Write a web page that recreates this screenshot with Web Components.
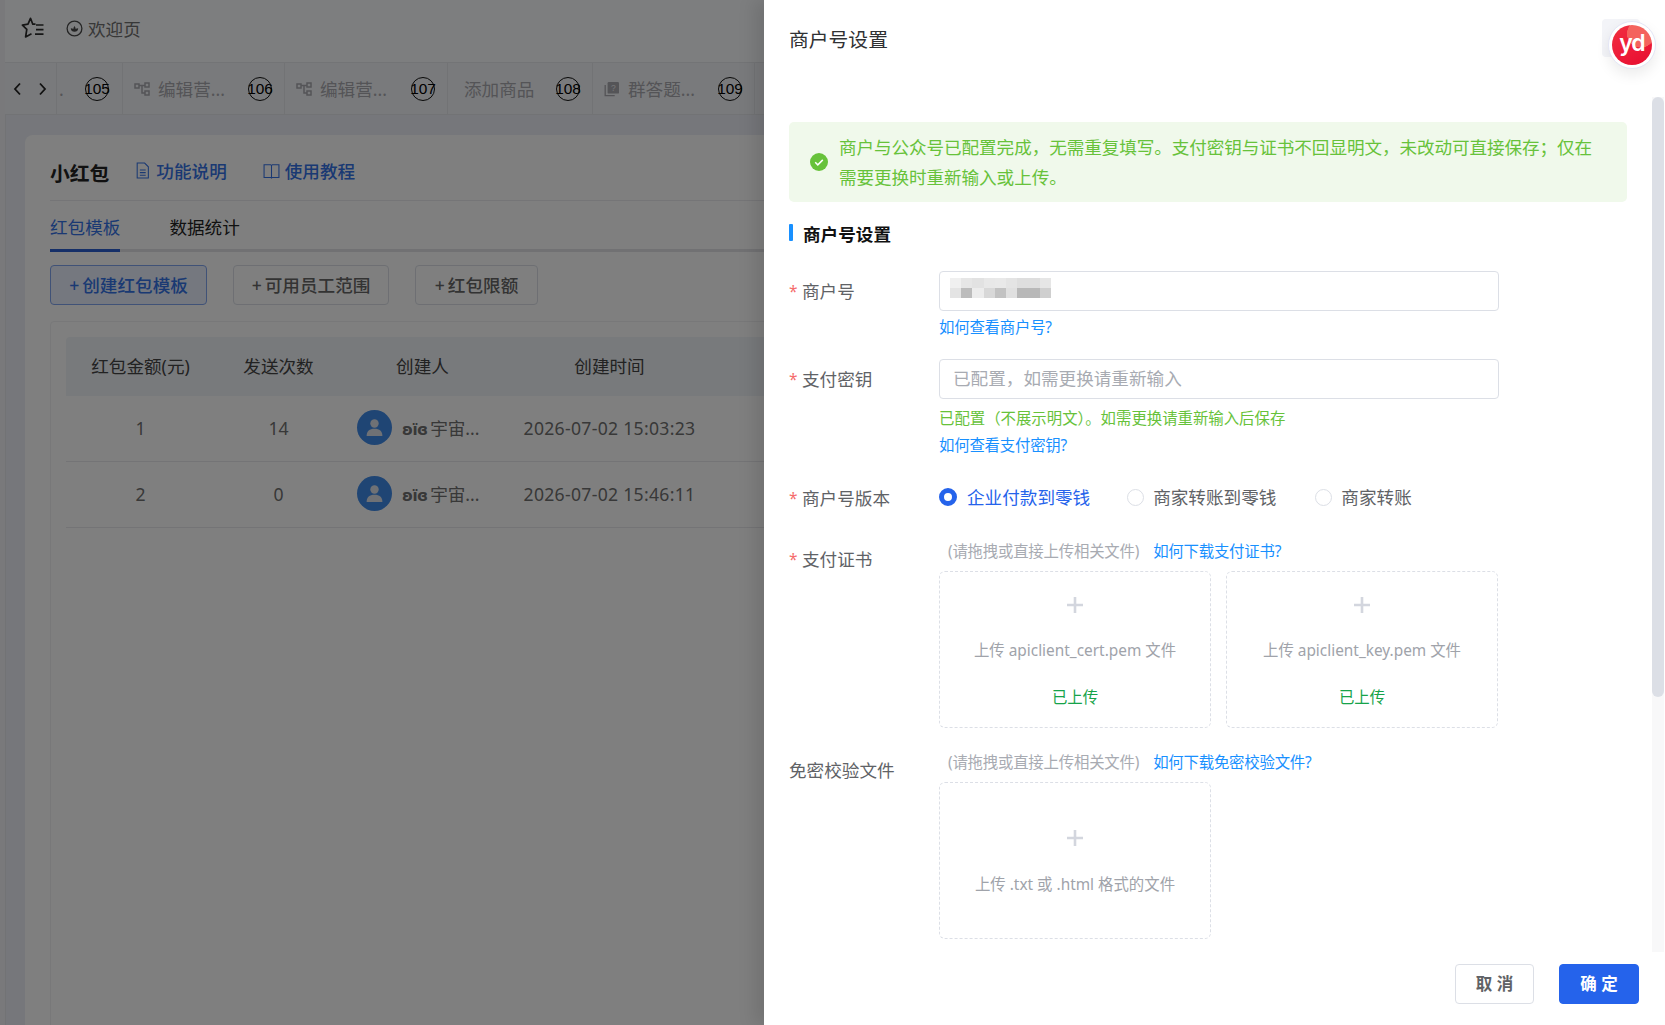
<!DOCTYPE html>
<html lang="zh-CN">
<head>
<meta charset="utf-8">
<title>商户号设置</title>
<style>
    html, body { margin: 0; height: 100%; overflow: hidden; }
    body { font-family: "Noto Sans", "Noto Sans CJK SC", sans-serif; font-size: 17.6px; }
</style>
</head>
<body>
<template id="icons">
    <svg id="node" viewBox="0 0 16 16" fill="none" stroke="currentColor" stroke-width="1.5"><rect x="1" y="3" width="4" height="4"/><rect x="11" y="2" width="4" height="4"/><rect x="11" y="10" width="4" height="4"/><path d="M5 4.5h6M8 4.5V12h3"/></svg>
    <svg id="quiz" viewBox="0 0 16 16"><path d="M1.2 4v10.6h9.5" fill="none" stroke="currentColor" stroke-width="1.3"/><rect x="3.6" y="1" width="11.4" height="11.6" rx="1.2" fill="currentColor"/><text x="9.3" y="10" font-size="8.5" font-family="Liberation Sans" text-anchor="middle" fill="#eee">?</text></svg>
</template>

<app-shell>
    <top-bar></top-bar>
    <tab-strip>
        <tab-item num="105" width="66" label="." cut></tab-item>
        <tab-item num="106" width="162" label="编辑营..." icon="node"></tab-item>
        <tab-item num="107" width="163" label="编辑营..." icon="node"></tab-item>
        <tab-item num="108" width="145" label="添加商品"></tab-item>
        <tab-item num="109" width="163" label="群答题..." icon="quiz"></tab-item>
    </tab-strip>
    <hongbao-page></hongbao-page>
</app-shell>
<drawer-mask></drawer-mask>
<merchant-drawer></merchant-drawer>

<script>
const ICONS = {};
document.getElementById("icons").content.querySelectorAll("svg").forEach(s => ICONS[s.id] = s.outerHTML);

class AppShell extends HTMLElement {
    constructor() {
        super();
        this.attachShadow({ mode: "open" });
    }
    connectedCallback() {
        this.shadowRoot.innerHTML = `
            <style>
                :host { display: block; height: 1025px; background: #eceff6; border-left: 5px solid #f2f3f6; box-shadow: inset 1px 0 0 #e4e6ea; box-sizing: border-box; overflow: hidden; color: #555; }
            </style>
            <slot></slot>
        `;
    }
}

class TopBar extends HTMLElement {
    constructor() {
        super();
        this.attachShadow({ mode: "open" });
    }
    connectedCallback() {
        this.shadowRoot.innerHTML = `
            <style>
                :host { display: flex; align-items: center; height: 63px; box-sizing: border-box; background: #fbfdff; border-bottom: 1px solid #e6e8ec; padding: 0 0 6px 16px; }
                .star { width: 24px; height: 22px; color: #2c2c2c; }
                .home { display: flex; align-items: center; margin-left: 21px; gap: 5px; color: #707070; }
                .home svg { width: 17px; height: 17px; color: #4a4a4a; }
            </style>
            <svg class="star" viewBox="0 0 24 22" fill="none" stroke="currentColor" stroke-width="1.7" stroke-linejoin="round"><path d="M14.5 7.2h-2.7L9.5 1.3 7 7.2l-5.6.9 4.4 4.3-1.2 7.6 5.9-3.2"/><path d="M15 8h7.5M15 12.6h7.5M14 17.2h8.5"/></svg>
            <div class="home">
                <svg viewBox="0 0 17 17" fill="none" stroke="currentColor" stroke-width="1.3"><circle cx="8.5" cy="8.5" r="7.4"/><path d="M4.8 8.2c0 2.4 1.6 3.6 3.7 3.6s3.7-1.2 3.7-3.6c-1.2 0-2 .3-2.5.9-.2-1.2-.6-2.2-1.2-3-.6.8-1 1.8-1.2 3-.5-.6-1.3-.9-2.5-.9z" fill="currentColor" stroke="none"/></svg>
                <span>欢迎页</span>
            </div>
        `;
    }
}

class TabStrip extends HTMLElement {
    constructor() {
        super();
        this.attachShadow({ mode: "open" });
    }
    connectedCallback() {
        this.shadowRoot.innerHTML = `
            <style>
                :host { display: flex; height: 52px; box-sizing: border-box; background: #f3f5f8; border-bottom: 1px solid #e4e6ea; }
                .arrows { display: flex; align-items: center; justify-content: space-between; width: 51px; box-sizing: border-box; padding: 0 9px 0 8px; color: #222; }
                .arrows svg { width: 9px; height: 14px; }
            </style>
            <div class="arrows">
                <svg viewBox="0 0 9 14" fill="none" stroke="currentColor" stroke-width="1.8"><path d="M7 1.5L2 7l5 5.5"/></svg>
                <svg viewBox="0 0 9 14" fill="none" stroke="currentColor" stroke-width="1.8"><path d="M2 1.5L7 7l-5 5.5"/></svg>
            </div>
            <slot></slot>
        `;
    }
}

class TabItem extends HTMLElement {
    constructor() {
        super();
        this.attachShadow({ mode: "open" });
    }
    connectedCallback() {
        const icon = this.getAttribute("icon");
        const cut = this.hasAttribute("cut");
        this.shadowRoot.innerHTML = `
            <style>
                :host { display: flex; align-items: center; box-sizing: border-box; width: ${this.getAttribute("width")}px; padding: 0 ${cut ? 13 : 12}px 0 ${cut ? 2 : 11}px; border-left: 1px solid #e4e6ea; color: #a8a8ae; gap: 8px; }
                :host(:last-child) { border-right: 1px solid #e4e6ea; }
                svg { width: 16px; height: 16px; flex: none; }
                .label { flex: 1; white-space: nowrap; }
                .label.plain { padding-left: ${cut ? 0 : 5}px; }
                .num { width: 22px; height: 22px; flex: none; border: 1px solid #111; border-radius: 50%; display: flex; justify-content: center; align-items: center; color: #000; font-size: 15.4px; font-family: "Liberation Sans", sans-serif; }
            </style>
            ${icon ? ICONS[icon] : ""}
            <span class="label ${icon ? "" : "plain"}">${this.getAttribute("label")}</span>
            <span class="num">${this.getAttribute("num")}</span>
        `;
    }
}

class HongbaoPage extends HTMLElement {
    constructor() {
        super();
        this.attachShadow({ mode: "open" });
    }
    style() {
        return `
            :host { display: block; margin: 20px 0 0 20px; background: #fff; border-radius: 8px 8px 0 0; padding: 0 25px; height: 960px; }
            .head { display: flex; align-items: center; height: 66px; box-sizing: border-box; padding-top: 6px; border-bottom: 1px solid #eaebee; }
            .head b { font-size: 19.8px; color: #222; margin-right: 25px; position: relative; top: 2px; }
            .doc-link { display: flex; align-items: center; gap: 5px; margin: 0 36px 0 0; color: #3573e6; font-weight: 500; }
            .doc-link svg { width: 17px; height: 17px; }
            .tabs { display: flex; height: 48px; gap: 49px; border-bottom: 3px solid #e2e3e6; }
            .tabs span { line-height: 53px; height: 48px; color: #222; }
            .tabs .on { color: #3573e6; border-bottom: 3px solid #2a5fd0; }
            .btns { display: flex; gap: 26px; margin-top: 13px; }
            .btn { display: flex; justify-content: center; align-items: center; height: 40px; box-sizing: border-box; padding-bottom: 1px; border: 1px solid #dcdfe6; border-radius: 4px; font-weight: 500; color: #666; background: #fff; }
            .btn.main { color: #3573e6; border-color: #80a4ee; background: #eaf1ff; }
            .btn i { font-style: normal; margin-right: 3px; }
            .wrap { margin-top: 16px; border: 1px solid #f0f1f3; border-radius: 4px; padding: 15px; height: 700px; }
            .row { display: grid; grid-template-columns: 149px 127px 161px 213px 1fr; align-items: center; height: 66px; box-sizing: border-box; padding-bottom: 2px; border-bottom: 1px solid #e8e9ec; text-align: center; color: #707070; }
            .row.th { height: 59px; background: #f1f4f8; border: 0; color: #444; border-radius: 4px 4px 0 0; }
            .who { display: flex; align-items: center; justify-content: flex-start; padding-left: 15px; gap: 10px; white-space: nowrap; }
            .ava { width: 35px; height: 35px; border-radius: 50%; background: #3f8ae8; display: flex; justify-content: center; align-items: center; }
            .ava svg { width: 21px; height: 21px; }
            .time { letter-spacing: .3px; white-space: nowrap; }
            .nick { font-family: "DejaVu Sans", sans-serif; font-weight: 700; font-size: 15px; letter-spacing: -.5px; margin-right: -2px; }
        `;
    }
    rowHtml(amount, count, time) {
        return `
            <div class="row">
                <span>${amount}</span><span>${count}</span>
                <div class="who">
                    <span class="ava"><svg viewBox="0 0 20 20" fill="#dfe3ea"><circle cx="10" cy="6.2" r="4"/><path d="M2.5 18c0-4.6 2.8-6.8 7.5-6.8s7.5 2.2 7.5 6.8z"/></svg></span>
                    <span><span class="nick">ʚïɞ</span> 宇宙...</span>
                </div>
                <span class="time">${time}</span><span></span>
            </div>
        `;
    }
    connectedCallback() {
        this.shadowRoot.innerHTML = `
            <style>${this.style()}</style>
            <div class="head">
                <b>小红包</b>
                <span class="doc-link"><svg viewBox="0 0 16 16" fill="none" stroke="currentColor" stroke-width="1"><path d="M3 1h7l3.5 3.5V15H3zM5.5 7.5h5.5M5.5 10h5.5M5.5 12.5h5.500"/></svg>功能说明</span>
                <span class="doc-link"><svg viewBox="0 0 16 16" fill="none" stroke="currentColor" stroke-width="1"><path d="M1 2.500h6.200l.8.800.8-.8H15v12H8.800l-.8.600-.8-.6H1zM8 3.300v11.500"/></svg>使用教程</span>
            </div>
            <div class="tabs"><span class="on">红包模板</span><span>数据统计</span></div>
            <div class="btns">
                <div class="btn main" style="width:157px"><i>+</i>创建红包模板</div>
                <div class="btn" style="width:156px"><i>+</i>可用员工范围</div>
                <div class="btn" style="width:123px"><i>+</i>红包限额</div>
            </div>
            <div class="wrap">
                <div class="row th"><span>红包金额(元)</span><span>发送次数</span><span>创建人</span><span>创建时间</span><span></span></div>
                ${this.rowHtml(1, 14, "2026-07-02 15:03:23")}
                ${this.rowHtml(2, 0, "2026-07-02 15:46:11")}
            </div>
        `;
    }
}

class DrawerMask extends HTMLElement {
    constructor() {
        super();
        this.attachShadow({ mode: "open" });
    }
    connectedCallback() {
        this.shadowRoot.innerHTML = `<style>:host { display: block; position: absolute; inset: 0; background: rgba(0,0,0,.5); }</style>`;
    }
}

class FormRow extends HTMLElement {
    constructor() {
        super();
        this.attachShadow({ mode: "open" });
    }
    connectedCallback() {
        const req = this.hasAttribute("required");
        this.shadowRoot.innerHTML = `
            <style>
                :host { display: grid; grid-template-columns: 150px 1fr; margin-top: var(--gap, 20px); color: #606266; }
                .label { line-height: var(--label-lh, 40px); white-space: nowrap; }
                .req { color: #f56c6c; display: inline-block; width: 13px; font-size: 15.4px; position: relative; top: -1px; }
            </style>
            <div class="label">${req ? `<span class="req">*</span>` : ""}${this.getAttribute("label")}</div>
            <div><slot></slot></div>
        `;
    }
}

class UploadBox extends HTMLElement {
    constructor() {
        super();
        this.attachShadow({ mode: "open" });
    }
    connectedCallback() {
        const done = this.hasAttribute("done");
        this.shadowRoot.innerHTML = `
            <style>
                :host { display: flex; flex-direction: column; align-items: center; box-sizing: border-box; width: 272px; height: 157px; border: 1px dashed #dcdfe6; border-radius: 6px; color: #a0a3aa; font-size: 15.4px; padding-top: ${done ? 25 : 47}px; }
                svg { width: 16px; height: 16px; }
                .tip { margin-top: ${done ? 27 : 28}px; line-height: 22px; white-space: nowrap; }
                .done { margin-top: 25px; line-height: 22px; color: #16a34a; }
            </style>
            <svg viewBox="0 0 16 16" fill="#d3d6de"><path d="M6.700 0h2.600v6.700H16v2.600H9.300V16H6.700V9.300H0V6.700h6.700z"/></svg>
            <div class="tip"><slot></slot></div>
            ${done ? `<div class="done">已上传</div>` : ""}
        `;
    }
}

class RadioOption extends HTMLElement {
    constructor() {
        super();
        this.attachShadow({ mode: "open" });
    }
    connectedCallback() {
        const on = this.hasAttribute("checked");
        this.shadowRoot.innerHTML = `
            <style>
                :host { display: inline-flex; align-items: center; gap: ${on ? 10 : 9}px; color: ${on ? "#2563eb" : "#606266"}; white-space: nowrap; line-height: 38px; height: 40px; }
                .dot { width: 17px; height: 17px; box-sizing: border-box; border-radius: 50%; border: 1px solid #dcdfe6; background: #fff; position: relative; top: -1px; }
                :host([checked]) .dot { width: 18px; height: 18px; border: 5.500px solid #2563eb; }
                .txt { height: 40px; }
            </style>
            <span class="dot"></span><span class="txt"><slot></slot></span>
        `;
    }
}

class MerchantDrawer extends HTMLElement {
    constructor() {
        super();
        this.attachShadow({ mode: "open" });
    }
    style() {
        return `
            :host { display: flex; flex-direction: column; position: absolute; top: 0; right: 0; bottom: 0; width: 901px; background: #fff; box-shadow: -10px 0 16px rgba(0,0,0,.1); font-size: 17.6px; }
            header { flex: none; height: 78px; line-height: 80px; padding-left: 25px; font-size: 19.8px; color: #303133; }
            main { flex: 1; min-height: 0; overflow: hidden; padding: 44px 38px 0 25px; }
            footer { flex: none; height: 73px; box-sizing: border-box; padding: 12px 26px 0 0; display: flex; justify-content: flex-end; gap: 25px; }
            .alert { display: flex; align-items: center; gap: 11px; height: 80px; box-sizing: border-box; background: #f0f9eb; border-radius: 5px; padding: 0 22px 0 21px; color: #67c23a; line-height: 30px; letter-spacing: -.08px; }
            .alert svg { width: 18px; height: 18px; flex: none; }
            .section { display: flex; align-items: center; margin-top: 21px; height: 22px; gap: 10px; font-weight: 700; color: #111; line-height: 22px; }
            .section::before { content: ""; width: 4px; height: 17px; border-radius: 1px; background: #1890ff; position: relative; top: -2px; }
            .input { height: 40px; width: 560px; box-sizing: border-box; border: 1px solid #dcdfe6; border-radius: 4px; padding-left: 13px; line-height: 36px; color: #a8abb2; }
            .mosaic { display: grid; grid-template-columns: repeat(9, 11.2px); grid-auto-rows: 10px; margin: 6px 0 0 -3px; }
            .link { color: #1890ff; font-size: 15.4px; line-height: 22px; letter-spacing: -.2px; }
            .sub { display: block; margin-top: 6px; }
            .ok { color: #67c23a; font-size: 15.4px; line-height: 22px; margin-top: 9px; }
            .radios { display: flex; align-items: center; height: 40px; gap: 37px; }
            .hint { display: flex; gap: 14px; font-size: 15.4px; line-height: 22px; color: #a8abb2; padding-left: 9px; }
            .hint span:first-child { letter-spacing: -.2px; }
            .boxes { display: flex; gap: 15px; margin-top: 8px; }
            .logo { position: absolute; top: 19px; right: 25px; width: 38px; height: 38px; background: #f3f4f8; border-radius: 4px; }
            .logo-mark { position: absolute; top: 21px; right: 9px; width: 48px; height: 48px; box-sizing: border-box; border-radius: 50%; background: #fff; border: 1px solid #e4e6f6; box-shadow: 0 6px 14px rgba(0,0,0,.08); display: flex; justify-content: center; align-items: center; }
            .logo-mark span { width: 40px; height: 40px; border-radius: 50%; background: radial-gradient(circle at 72% 22%, #f4635d 0 32%, transparent 33%), linear-gradient(150deg, #f0303f 0%, #ee1e3a 50%, #e60c2f 100%); color: #fff; font: 600 23px/37px "Inter", "Liberation Sans", sans-serif; letter-spacing: -1px; text-align: center; }
            .track { position: absolute; top: 97px; right: 1px; width: 12px; height: 855px; background: #f8f8f9; }
            .thumb { height: 600px; background: #dcdfe6; border-radius: 6px; }
            .btn { width: 79px; height: 40px; box-sizing: border-box; border: 1px solid #dcdfe6; border-radius: 4px; text-align: center; line-height: 38px; font-size: 16.5px; font-weight: 700; color: #606266; background: #fff; }
            .btn.primary { width: 80px; background: #2563eb; border-color: #2563eb; color: #fff; }
        `;
    }
    mosaic() {
        const shades = ["f0", "e6", "e2", "e8", "e9", "e4", "de", "de", "e6",
                        "e4", "bc", "ec", "d8", "c2", "e0", "b8", "b8", "cf"];
        return shades.map(c => `<i style="background:#${c}${c}${c}"></i>`).join("");
    }
    connectedCallback() {
        this.shadowRoot.innerHTML = `
            <style>${this.style()}</style>
            <header>商户号设置</header>
            <div class="logo"></div>
            <div class="logo-mark"><span>yd</span></div>
            <div class="track"><div class="thumb"></div></div>
            <main>
                <div class="alert">
                    <svg viewBox="0 0 18 18"><circle cx="9" cy="9" r="9" fill="#67c23a"/><path d="M5.2 9.3l2.6 2.6 5-5" fill="none" stroke="#fff" stroke-width="1.5"/></svg>
                    <div>商户与公众号已配置完成，无需重复填写。支付密钥与证书不回显明文，未改动可直接保存；仅在需要更换时重新输入或上传。</div>
                </div>
                <div class="section">商户号设置</div>

                <form-row label="商户号" required style="--gap:26px">
                    <div class="input"><div class="mosaic">${this.mosaic()}</div></div>
                    <span class="link sub">如何查看商户号?</span>
                </form-row>

                <form-row label="支付密钥" required style="--gap:20px">
                    <div class="input">已配置，如需更换请重新输入</div>
                    <div class="ok">已配置（不展示明文）。如需更换请重新输入后保存</div>
                    <span class="link sub" style="margin-top:5px">如何查看支付密钥?</span>
                </form-row>

                <form-row label="商户号版本" required style="--gap:21px">
                    <div class="radios">
                        <radio-option checked>企业付款到零钱</radio-option>
                        <radio-option>商家转账到零钱</radio-option>
                        <radio-option style="margin-left:2px">商家转账</radio-option>
                    </div>
                </form-row>

                <form-row label="支付证书" required style="--gap:21px;--label-lh:37px">
                    <div class="hint"><span>(请拖拽或直接上传相关文件)</span><span class="link">如何下载支付证书?</span></div>
                    <div class="boxes">
                        <upload-box done>上传 apiclient_cert.pem 文件</upload-box>
                        <upload-box done>上传 apiclient_key.pem 文件</upload-box>
                    </div>
                </form-row>

                <form-row label="免密校验文件" style="--gap:24px;--label-lh:37px">
                    <div class="hint"><span>(请拖拽或直接上传相关文件)</span><span class="link">如何下载免密校验文件?</span></div>
                    <div class="boxes"><upload-box>上传 .txt 或 .html 格式的文件</upload-box></div>
                </form-row>
            </main>
            <footer>
                <div class="btn">取 消</div>
                <div class="btn primary">确 定</div>
            </footer>
        `;
    }
}

customElements.define("app-shell", AppShell);
customElements.define("top-bar", TopBar);
customElements.define("tab-strip", TabStrip);
customElements.define("tab-item", TabItem);
customElements.define("hongbao-page", HongbaoPage);
customElements.define("drawer-mask", DrawerMask);
customElements.define("form-row", FormRow);
customElements.define("upload-box", UploadBox);
customElements.define("radio-option", RadioOption);
customElements.define("merchant-drawer", MerchantDrawer);
</script>
</body>
</html>
